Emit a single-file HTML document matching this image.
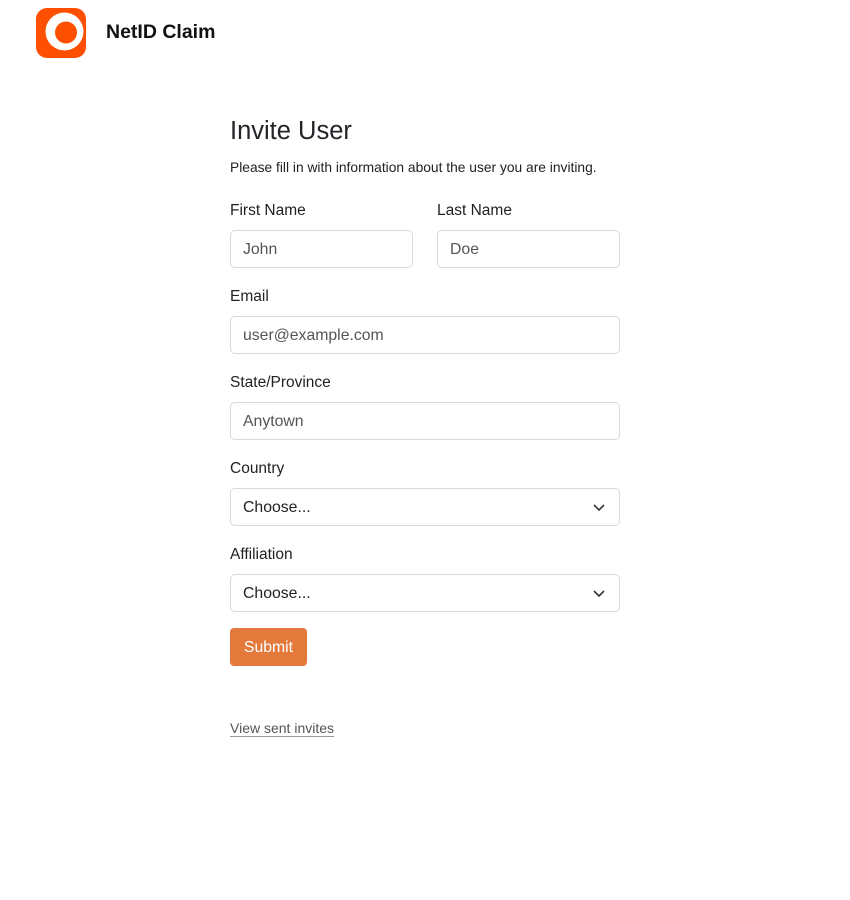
<!DOCTYPE html>
<html><head><meta charset="utf-8"><style>
body{margin:0;background:#fff;font-family:"Liberation Sans",sans-serif;color:#1d1d1f;}
.hdr{position:absolute;left:36px;top:8px;}
.title{position:absolute;left:106px;top:21px;font-size:19.5px;font-weight:bold;color:#111;}
.c{position:absolute;left:230px;top:0;width:390px;}
.abs{position:absolute;}
h1{position:absolute;top:117px;left:0;margin:0;font-size:25.5px;font-weight:normal;color:#212529;}
.d{top:160px;font-size:13.8px;color:#222;}
.l{font-size:15.5px;color:#222;}
.i{box-sizing:border-box;height:38px;border:1px solid #d9d9de;border-radius:5px;padding:0 12px;line-height:38px;font-size:15.8px;color:#555;}
.s{color:#222;}
.s svg{position:absolute;right:14px;top:13px;}
.btn{left:0;top:628px;width:77px;height:38px;background:#e37a3c;border-radius:4px;color:#fff;font-size:15.8px;line-height:40px;text-align:center;}
.lk{top:720px;font-size:14px;color:#555;border-bottom:1px solid #999;line-height:16px;}
</style></head><body>
<svg class="hdr" width="50" height="50" viewBox="0 0 50 50"><rect width="50" height="50" rx="11" fill="#fe5000"/><circle cx="28.5" cy="23.5" r="19" fill="#fff"/><circle cx="30" cy="24.5" r="11" fill="#fe5000"/></svg>
<div class="title">NetID Claim</div>
<div class="c">
<h1>Invite User</h1>
<div class="abs d">Please fill in with information about the user you are inviting.</div>
<div class="abs l" style="top:202px;left:0">First Name</div>
<div class="abs l" style="top:202px;left:207px">Last Name</div>
<div class="abs i" style="top:230px;left:0;width:183px">John</div>
<div class="abs i" style="top:230px;left:207px;width:183px">Doe</div>
<div class="abs l" style="top:288px;left:0">Email</div>
<div class="abs i" style="top:316px;left:0;width:390px">user@example.com</div>
<div class="abs l" style="top:374px;left:0">State/Province</div>
<div class="abs i" style="top:402px;left:0;width:390px">Anytown</div>
<div class="abs l" style="top:460px;left:0">Country</div>
<div class="abs i s" style="top:488px;left:0;width:390px">Choose...<svg width="12" height="10" viewBox="0 0 12 10"><path d="M1 3l5 5 5-5" fill="none" stroke="#333" stroke-width="1.6"/></svg></div>
<div class="abs l" style="top:546px;left:0">Affiliation</div>
<div class="abs i s" style="top:574px;left:0;width:390px">Choose...<svg width="12" height="10" viewBox="0 0 12 10"><path d="M1 3l5 5 5-5" fill="none" stroke="#333" stroke-width="1.6"/></svg></div>
<div class="abs btn">Submit</div>
<div class="abs lk">View sent invites</div>
</div>
</body></html>
